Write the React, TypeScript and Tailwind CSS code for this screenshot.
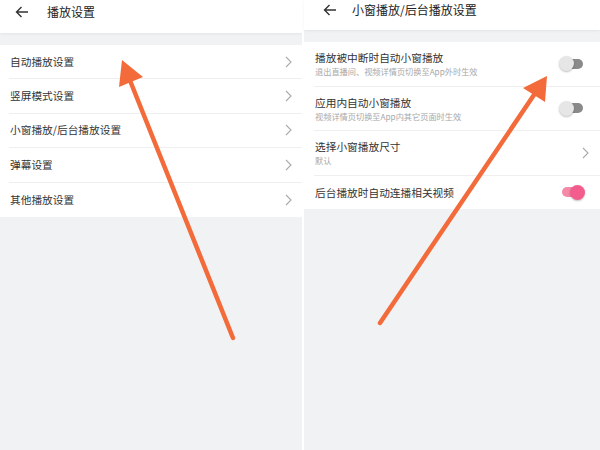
import React from "react";

const font = { fontFamily: '"Noto Sans CJK SC", "Noto Sans", sans-serif' };

const BackArrow = () => (
  <svg width="14" height="12" viewBox="0 0 14 12" fill="none" stroke="#333" strokeWidth="1.4">
    <path d="M13 6H1.5M6.5 1L1.5 6l5 5" />
  </svg>
);

const Chevron = () => (
  <svg width="7" height="12" viewBox="0 0 7 12" fill="none" stroke="#aaa" strokeWidth="1.1">
    <path d="M1 1l5 5-5 5" />
  </svg>
);

const Toggle = ({ on }: { on: boolean }) => (
  <div className="relative w-[26px] h-[16px] flex items-center">
    <div
      className={`absolute left-[3px] right-[2px] h-[10px] rounded-full ${
        on ? "bg-[#f48aa8]" : "bg-[#8a8a8a]"
      }`}
    />
    <div
      className={`absolute w-[15px] h-[15px] rounded-full shadow-[0_1px_2px_rgba(0,0,0,0.25)] ${
        on ? "right-0 bg-[#f25d8e]" : "left-0 bg-[#e6e6e6]"
      }`}
    />
  </div>
);

const leftRows = ["自动播放设置", "竖屏模式设置", "小窗播放/后台播放设置", "弹幕设置", "其他播放设置"];

type RightRow = { title: string; sub?: string; kind: "off" | "on" | "arrow" };

const rightRows: RightRow[] = [
  { title: "播放被中断时自动小窗播放", sub: "退出直播间、视频详情页切换至App外时生效", kind: "off" },
  { title: "应用内自动小窗播放", sub: "视频详情页切换至App内其它页面时生效", kind: "off" },
  { title: "选择小窗播放尺寸", sub: "默认", kind: "arrow" },
  { title: "后台播放时自动连播相关视频", kind: "on" },
];

const App = () => {
  return (
    <div className="relative w-[600px] h-[450px] flex bg-white overflow-hidden" style={font}>
      {/* left screen */}
      <div className="w-[302px] h-full bg-[#f1f2f4] flex flex-col">
        <div className="h-[33px] bg-white flex items-center pl-[15px] pb-[9px] shadow-[0_1px_3px_rgba(0,0,0,0.06)]">
          <BackArrow />
          <span className="ml-[18px] text-[12px] leading-none text-[#222]">播放设置</span>
        </div>
        <div className="h-[12px]" />
        <div className="bg-white">
          {leftRows.map((row, i) => (
            <div key={i} className="pl-[9px]">
              <div
                className={`h-[34.4px] flex items-center justify-between pr-[10px] ${
                  i < leftRows.length - 1 ? "border-b border-[#efefef]" : ""
                }`}
              >
                <span className="pl-px text-[10.7px] text-[#333]">{row}</span>
                <Chevron />
              </div>
            </div>
          ))}
        </div>
      </div>

      <div className="w-[2px] h-full bg-white" />

      {/* right screen */}
      <div className="flex-1 h-full bg-[#f1f2f4] flex flex-col">
        <div className="h-[30px] bg-white flex items-center pl-[19px] pb-[10px] shadow-[0_1px_3px_rgba(0,0,0,0.06)]">
          <BackArrow />
          <span className="ml-[15px] text-[12px] leading-none text-[#222]">小窗播放/后台播放设置</span>
        </div>
        <div className="h-[12px]" />
        <div className="bg-white">
          {rightRows.map((row, i) => (
            <div key={i} className="pl-[10px]">
              <div
                className={`flex items-center justify-between pr-[10px] ${
                  row.sub ? "h-[44.5px]" : "h-[33.5px]"
                } ${i < rightRows.length - 1 ? "border-b border-[#efefef]" : ""}`}
              >
                <div className="flex flex-col pl-[1px]">
                  <span className="text-[10.7px] leading-[15px] text-[#333]">{row.title}</span>
                  {row.sub && (
                    <span className="text-[8.2px] leading-[12px] text-[#a8a8a8]">{row.sub}</span>
                  )}
                </div>
                {row.kind === "arrow" ? (
                  <div className="pr-[1px]">
                    <Chevron />
                  </div>
                ) : (
                  <div className="pr-[5px]">
                    <Toggle on={row.kind === "on"} />
                  </div>
                )}
              </div>
            </div>
          ))}
        </div>
      </div>

      {/* annotation arrows */}
      <svg className="absolute inset-0 pointer-events-none" width="600" height="450">
        <g stroke="#f36b3a" strokeWidth="4.5" strokeLinecap="round" fill="#f36b3a">
          <line x1="233" y1="338" x2="125" y2="68" />
          <line x1="380" y1="323" x2="542" y2="83" />
        </g>
        <g fill="#f36b3a">
          <polygon points="122,60 119,87 143,77" />
          <polygon points="547,76 523,88 545,102" />
        </g>
      </svg>
    </div>
  );
};

export default App;
